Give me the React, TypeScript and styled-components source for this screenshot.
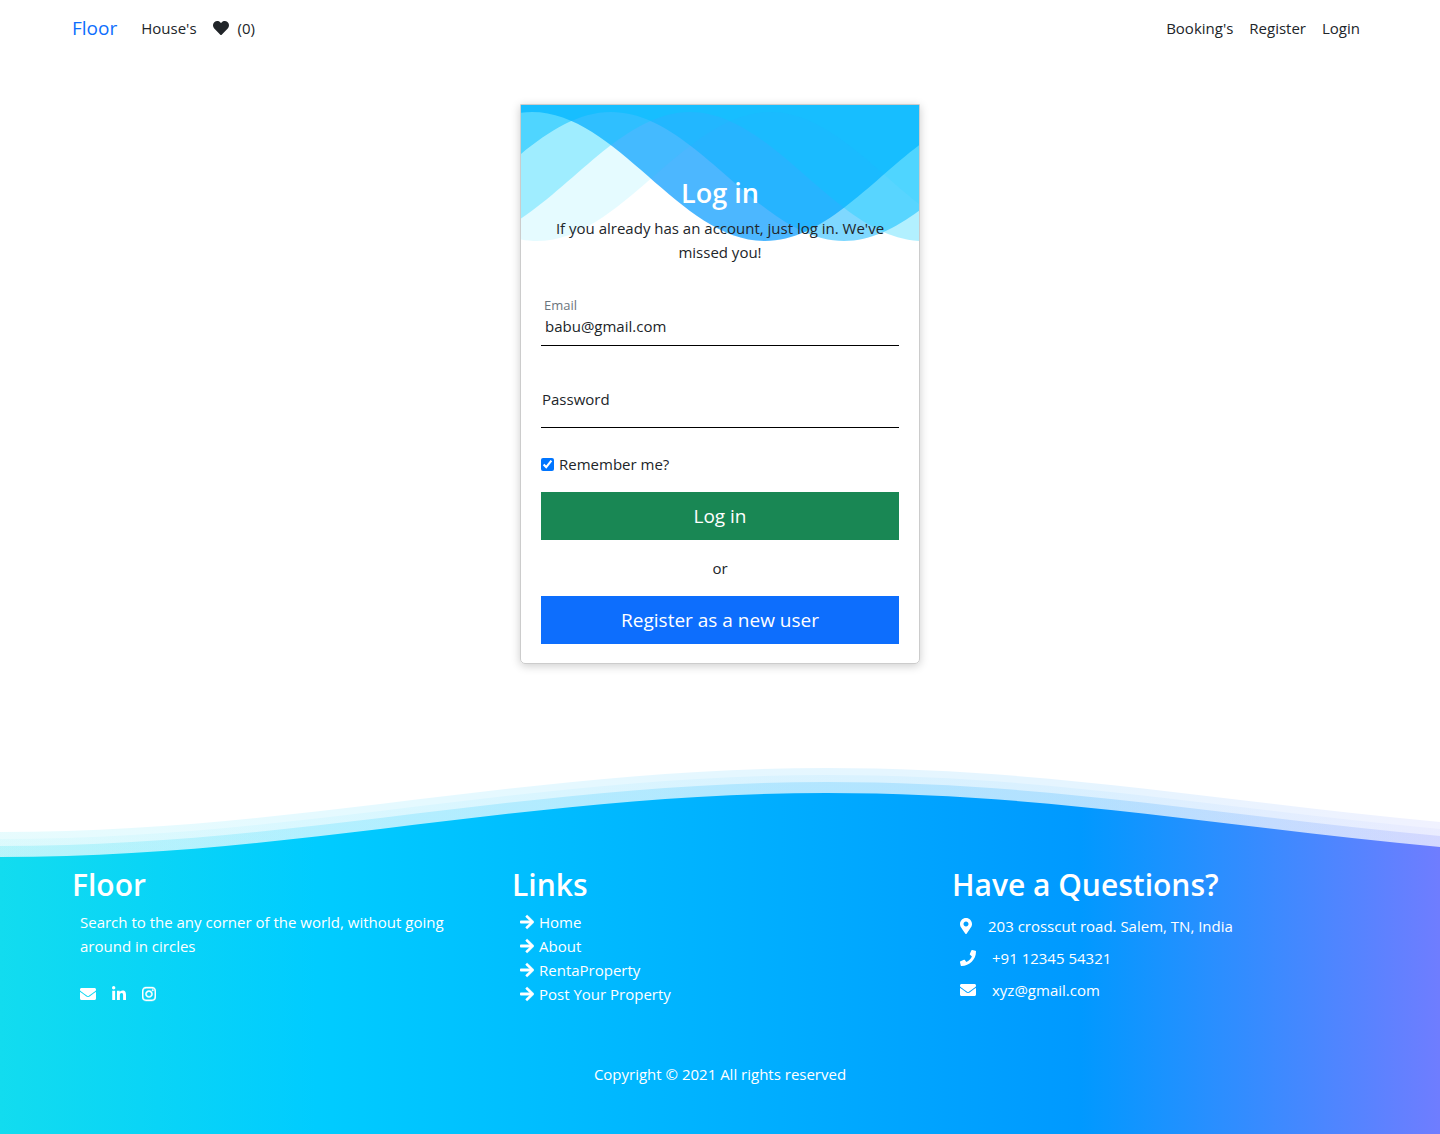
import React from 'react';
import styled, { createGlobalStyle } from 'styled-components';
import {
  FaArrowRight,
  FaEnvelope,
  FaHeart,
  FaInstagram,
  FaLinkedinIn,
  FaMapMarkerAlt,
  FaPhone,
} from 'react-icons/fa';

const GlobalStyle = createGlobalStyle`
  *, *::before, *::after { box-sizing: border-box; }
  body {
    margin: 0;
    background: #fff;
    color: #212529;
    font-family: "Open Sans", "Noto Sans", sans-serif;
    font-size: 15px;
    line-height: 24px;
  }
  a { color: inherit; text-decoration: none; }
  h1, h2, p, ul { margin: 0; padding: 0; }
  ul { list-style: none; }
`;

const Container = styled.div`
  width: 100%;
  max-width: 1320px;
  margin: 0 auto;
  padding: 0 12px;
`;

const Navbar = styled.nav`
  padding: 8px 0;
`;

const NavRow = styled(Container)`
  display: flex;
  align-items: center;
  justify-content: space-between;
  min-height: 40px;
`;

const Brand = styled.a`
  margin-right: 16px;
  color: #0d6efd;
  font-size: 19px;
  line-height: 30px;
`;

const NavGroup = styled.div`
  display: flex;
  align-items: center;
`;

const NavLink = styled.a`
  display: flex;
  align-items: center;
  gap: 9px;
  padding: 8px;
`;

const Icon = styled.span<{ $width?: number; $bold?: boolean }>`
  display: flex;
  flex: none;

  svg {
    width: ${(p) => p.$width ?? 16}px;
    height: 16px;
    stroke-width: ${(p) => (p.$bold ? 14 : 0)};
  }
`;

const Main = styled.main`
  display: flex;
  justify-content: center;
  padding: 48px 16px 102px;
`;

const Card = styled.section`
  display: grid;
  width: 400px;
  border: 1px solid #ccc;
  border-radius: 0 0 5px 5px;
  box-shadow: 0 2px 10px rgba(0, 0, 0, 0.2);
`;

const CardWaves = styled.svg`
  grid-area: 1 / 1;
  display: block;
  width: 100%;
  height: 137px;
`;

const CardBody = styled.form`
  grid-area: 1 / 1;
  z-index: 1;
  display: flex;
  flex-direction: column;
  padding: 71px 20px 19px;
`;

const CardTitle = styled.h1`
  color: #fff;
  font-size: 27px;
  font-weight: 600;
  line-height: 34px;
  text-align: center;
`;

const CardText = styled.p`
  margin-top: 6px;
  text-align: center;
`;

const Field = styled.div`
  display: flex;
  flex-direction: column;
  height: 50px;
  margin-top: 32px;
  border-bottom: 1px solid #000;
`;

const FloatingLabel = styled.label`
  padding-left: 3px;
  color: #6c757d;
  font-size: 13px;
  line-height: 18px;
`;

const TextInput = styled.input`
  width: 100%;
  height: 24px;
  padding: 0 4px;
  border: 0;
  outline: 0;
  background: transparent;
  color: #212529;
  font: inherit;
`;

const RestingField = styled(Field)`
  display: grid;
`;

const RestingLabel = styled.label`
  grid-area: 1 / 1;
  padding: 9px 1px 0;
`;

const RestingInput = styled(TextInput)`
  grid-area: 1 / 1;
  height: 100%;
`;

const Remember = styled.label`
  display: flex;
  align-items: center;
  gap: 5px;
  margin-top: 24px;
`;

const Checkbox = styled.input`
  width: 13px;
  height: 13px;
  margin: 0;
  accent-color: #0075ff;
`;

const Button = styled.button<{ $color: string }>`
  height: 48px;
  margin-top: 16px;
  border: 0;
  background: ${(p) => p.$color};
  color: #fff;
  font-family: inherit;
  font-size: 19px;
  line-height: 30px;
  cursor: pointer;
`;

const Divider = styled.p`
  margin-top: 16px;
  text-align: center;
`;

const FooterWave = styled.svg`
  display: block;
  width: 100%;
  height: 92px;
`;

const FooterBody = styled.div`
  padding: 8px 0 48px;
  background: linear-gradient(to right, #12dcef 0%, #00ccff 22%, #0099ff 75%, #6f7dff 100%);
  color: #fff;
`;

const Columns = styled(Container)`
  display: grid;
  grid-template-columns: repeat(3, 1fr);
  gap: 24px;
  min-height: 196px;
`;

const ColumnTitle = styled.h2`
  font-size: 30px;
  font-weight: 600;
  line-height: 38px;
`;

const ColumnBody = styled.div`
  padding: 6px 8px 0;
`;

const Social = styled.div`
  display: flex;
  align-items: center;
  gap: 16px;
  height: 24px;
  margin-top: 24px;
`;

const FooterLink = styled.a`
  display: flex;
  align-items: center;
  gap: 5px;
`;

const ContactRow = styled.li`
  display: flex;
  align-items: center;
  gap: 16px;
  padding: 4px 0;
`;

const Copyright = styled.p`
  text-align: center;
`;

const LINKS = ['Home', 'About', 'RentaProperty', 'Post Your Property'];

const CONTACTS = [
  { icon: <FaMapMarkerAlt />, width: 12, text: '203 crosscut road. Salem, TN, India' },
  { icon: <FaPhone />, width: 16, text: '+91 12345 54321' },
  { icon: <FaEnvelope />, width: 16, text: 'xyz@gmail.com' },
];

const CARD_LAYERS = [
  { crest: 11, fill: '#0099ff', opacity: 0.7 },
  { crest: 90, fill: '#00b2ff', opacity: 0.5 },
  { crest: 169, fill: '#00ccff', opacity: 0.3 },
  { crest: 249, fill: '#00d9ff', opacity: 0.1 },
];

const HALF_WAVE = 233;
const HANDLE = 85;

// Area between the top edge and a sine curve whose first crest is at the given x.
function cardWave(crest: number) {
  const top = 7;
  const bottom = 136;
  let x = crest - HALF_WAVE * 2;
  let y = top;
  let d = `M${x},0 V${y}`;
  while (x < 398) {
    const nextY = y === top ? bottom : top;
    d += ` C${x + HANDLE},${y} ${x + HALF_WAVE - HANDLE},${nextY} ${x + HALF_WAVE},${nextY}`;
    x += HALF_WAVE;
    y = nextY;
  }
  return `${d} V0 Z`;
}

const FOOTER_LAYERS = [
  { y: 66, opacity: 0.1 },
  { y: 73, opacity: 0.05 },
  { y: 80, opacity: 0.18 },
  { y: 91, opacity: 1 },
];

function footerWave(y: number) {
  const crest = y - 64;
  return `M0,${y} C300,${y} 527,${crest} 827,${crest} C1127,${crest} 1354,${y} 1654,${y} V92 H0 Z`;
}

export default function App() {
  return (
    <>
      <GlobalStyle />
      <Navbar>
        <NavRow>
          <NavGroup>
            <Brand href="#">Floor</Brand>
            <NavLink href="#">House's</NavLink>
            <NavLink href="#">
              <Icon><FaHeart /></Icon>
              (0)
            </NavLink>
          </NavGroup>
          <NavGroup>
            <NavLink href="#">Booking's</NavLink>
            <NavLink href="#">Register</NavLink>
            <NavLink href="#">Login</NavLink>
          </NavGroup>
        </NavRow>
      </Navbar>

      <Main>
        <Card>
          <CardWaves viewBox="0 0 398 137" preserveAspectRatio="none" aria-hidden="true">
            {CARD_LAYERS.map((layer) => (
              <path
                key={layer.crest}
                d={cardWave(layer.crest)}
                fill={layer.fill}
                fillOpacity={layer.opacity}
              />
            ))}
          </CardWaves>
          <CardBody>
            <CardTitle>Log in</CardTitle>
            <CardText>If you already has an account, just log in. We've missed you!</CardText>
            <Field>
              <FloatingLabel htmlFor="email">Email</FloatingLabel>
              <TextInput id="email" type="email" defaultValue="babu@gmail.com" />
            </Field>
            <RestingField>
              <RestingLabel htmlFor="password">Password</RestingLabel>
              <RestingInput id="password" type="password" />
            </RestingField>
            <Remember>
              <Checkbox type="checkbox" defaultChecked />
              Remember me?
            </Remember>
            <Button type="submit" $color="#198754">Log in</Button>
            <Divider>or</Divider>
            <Button type="button" $color="#0d6efd">Register as a new user</Button>
          </CardBody>
        </Card>
      </Main>

      <footer>
        <FooterWave viewBox="0 0 1440 92" preserveAspectRatio="none" aria-hidden="true">
          <defs>
            <linearGradient id="sea" gradientUnits="userSpaceOnUse" x1="0" y1="0" x2="1440" y2="0">
              <stop offset="0%" stopColor="#12dcef" />
              <stop offset="22%" stopColor="#00ccff" />
              <stop offset="75%" stopColor="#0099ff" />
              <stop offset="100%" stopColor="#6f7dff" />
            </linearGradient>
          </defs>
          {FOOTER_LAYERS.map((layer) => (
            <path key={layer.y} d={footerWave(layer.y)} fill="url(#sea)" fillOpacity={layer.opacity} />
          ))}
        </FooterWave>
        <FooterBody>
          <Columns>
            <section>
              <ColumnTitle>Floor</ColumnTitle>
              <ColumnBody>
                <p>Search to the any corner of the world, without going around in circles</p>
                <Social>
                  <a href="#" aria-label="Email">
                    <Icon><FaEnvelope /></Icon>
                  </a>
                  <a href="#" aria-label="LinkedIn">
                    <Icon $width={14}><FaLinkedinIn /></Icon>
                  </a>
                  <a href="#" aria-label="Instagram">
                    <Icon $width={14} $bold><FaInstagram /></Icon>
                  </a>
                </Social>
              </ColumnBody>
            </section>
            <section>
              <ColumnTitle>Links</ColumnTitle>
              <ColumnBody as="ul">
                {LINKS.map((link) => (
                  <li key={link}>
                    <FooterLink href="#">
                      <Icon $width={14} $bold><FaArrowRight /></Icon>
                      {link}
                    </FooterLink>
                  </li>
                ))}
              </ColumnBody>
            </section>
            <section>
              <ColumnTitle>Have a Questions?</ColumnTitle>
              <ColumnBody as="ul">
                {CONTACTS.map((contact) => (
                  <ContactRow key={contact.text}>
                    <Icon $width={contact.width}>{contact.icon}</Icon>
                    {contact.text}
                  </ContactRow>
                ))}
              </ColumnBody>
            </section>
          </Columns>
          <Copyright>Copyright © 2021 All rights reserved</Copyright>
        </FooterBody>
      </footer>
    </>
  );
}
